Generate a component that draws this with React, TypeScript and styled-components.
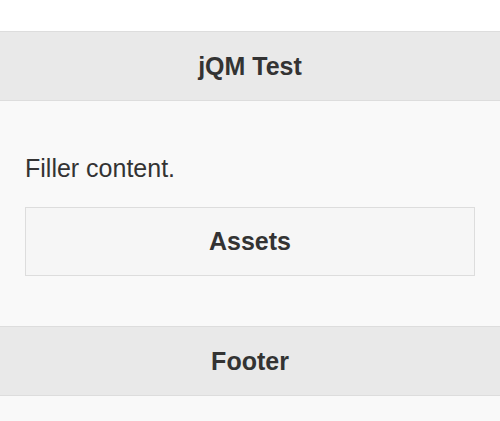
import React from "react";
import styled, { createGlobalStyle } from "styled-components";

const Global = createGlobalStyle`
  html, body { margin: 0; padding: 0; background: #ffffff; }
  body { font-family: "Liberation Sans", Arial, Helvetica, sans-serif; color: #333; }
`;

const Page = styled.div`
  padding-top: 31px;
  display: flex;
  flex-direction: column;
`;

const Bar = styled.div`
  background: #e9e9e9;
  border-top: 1px solid #dddddd;
  border-bottom: 1px solid #dddddd;
  height: 68px;
  display: flex;
  align-items: center;
  justify-content: center;
`;

const BarTitle = styled.h1`
  margin: 0;
  font-size: 25px;
  font-weight: bold;
  color: #333;
`;

const Content = styled.div`
  background: #f9f9f9;
  height: 225px;
  box-sizing: border-box;
  padding: 0 25px;
  display: flex;
  flex-direction: column;
`;

const Para = styled.p`
  margin: 52px 0 0;
  font-size: 25px;
  line-height: 30px;
  color: #333;
`;

const Button = styled.a`
  margin-top: 24px;
  box-sizing: border-box;
  height: 69px;
  display: flex;
  align-items: center;
  justify-content: center;
  background: #f6f6f6;
  border: 1px solid #dddddd;
  font-size: 25px;
  font-weight: bold;
  color: #333;
  text-decoration: none;
`;

const Tail = styled.div`
  background: #f9f9f9;
  height: 30px;
`;

export default function App() {
  return (
    <>
      <Global />
      <Page>
        <Bar>
          <BarTitle>jQM Test</BarTitle>
        </Bar>
        <Content>
          <Para>Filler content.</Para>
          <Button href="#">Assets</Button>
        </Content>
        <Bar>
          <BarTitle>Footer</BarTitle>
        </Bar>
        <Tail />
      </Page>
    </>
  );
}
